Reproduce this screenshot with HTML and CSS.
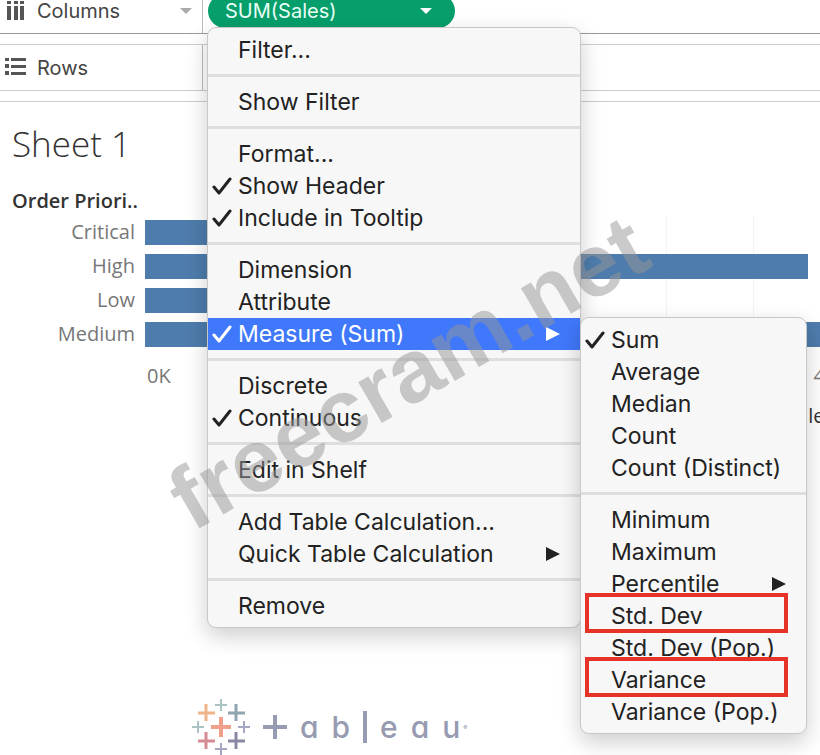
FILE: index.html
```html
<!DOCTYPE html>
<html lang="en">
<head>
    <meta charset="UTF-8">
    <meta name="viewport" content="width=device-width, initial-scale=1.0">
    <title>Sheet 1</title>
    <link rel="stylesheet" href="styles.css">
</head>
<body>
    <div class="workbook">
        <div class="shelf shelf-columns">
            <div class="shelf-name">
                <svg class="shelf-icon" viewBox="0 0 20 20" fill="#555">
                    <path d="M2 0h4v3H2zM9 0h4v3H9zM15 0h4v3h-4zM2 5h4v14H2zM9 5h4v14H9zM15 5h4v14h-4z"/>
                </svg>
                <span>Columns</span>
                <svg class="caret" viewBox="0 0 12 6"><path d="M0 0h12L6 6z" fill="#aaa"/></svg>
            </div>
            <div class="shelf-fields">
                <button class="pill" type="button">
                    <span>SUM(Sales)</span>
                    <svg class="caret" viewBox="0 0 12 6"><path d="M0 0h12L6 6z" fill="#fff"/></svg>
                </button>
            </div>
        </div>
        <div class="shelf shelf-rows">
            <div class="shelf-name">
                <svg class="shelf-icon" viewBox="0 0 20 20" fill="#555">
                    <path d="M0 0h4v3H0zM6 0h15v3H6zM0 6h4v4H0zM6 7h15v3H6zM0 13h4v4H0zM6 14h15v3H6z"/>
                </svg>
                <span>Rows</span>
            </div>
            <div class="shelf-fields"></div>
        </div>

        <main class="sheet">
            <h1>Sheet 1</h1>
            <h2>Order Priori..</h2>
            <div class="chart">
                <div class="labels">
                    <span>Critical</span>
                    <span>High</span>
                    <span>Low</span>
                    <span>Medium</span>
                </div>
                <div class="plot">
                    <div class="bar" style="width: 40%"></div>
                    <div class="bar" style="width: 98.2%"></div>
                    <div class="bar" style="width: 35%"></div>
                    <div class="bar" style="width: 100%"></div>
                </div>
            </div>
            <div class="axis">
                <span>0K</span>
                <span>400K</span>
            </div>
            <p class="axis-title">Sales</p>
        </main>

        <footer class="brand">
            <svg class="brand-mark" viewBox="0 0 58 58" fill="none">
                <path d="M29 19v20M19 29h20" stroke="#f0a08a" stroke-width="4"/>
                <path d="M14 6v17M6 15h17" stroke="#f0b489" stroke-width="3"/>
                <path d="M44 6v17M36 15h17" stroke="#8fa5b0" stroke-width="3"/>
                <path d="M14 34v17M6 43h17" stroke="#d58b92" stroke-width="3"/>
                <path d="M44 34v17M36 43h17" stroke="#8789a3" stroke-width="3"/>
                <path d="M29 1v12M23 7h12M6 23v12M0 29h12" stroke="#a9c2c4" stroke-width="2"/>
                <path d="M52 23v12M46 29h12M29 45v12M23 51h12" stroke="#a4a6c2" stroke-width="2"/>
            </svg>
            <svg class="brand-plus" viewBox="0 0 24 24"><path d="M12 0v24M0 12h24" stroke="#979bb1" stroke-width="4"/></svg>
            <span>a</span><span>b</span><span class="brand-bar"></span><span>e</span><span>a</span><span>u</span><sup>®</sup>
        </footer>
    </div>

    <div class="menu main-menu">
        <button type="button">Filter...</button>
        <hr>
        <button type="button">Show Filter</button>
        <hr>
        <button type="button">Format...</button>
        <button type="button" class="checked"><svg class="check" viewBox="0 0 20 18"><path d="M2 10l5 6L18 2"/></svg>Show Header</button>
        <button type="button" class="checked"><svg class="check" viewBox="0 0 20 18"><path d="M2 10l5 6L18 2"/></svg>Include in Tooltip</button>
        <hr>
        <button type="button">Dimension</button>
        <button type="button">Attribute</button>
        <button type="button" class="checked selected"><svg class="check" viewBox="0 0 20 18"><path d="M2 10l5 6L18 2"/></svg>Measure (Sum)<svg class="arrow" viewBox="0 0 14 14"><path d="M0 0l14 7L0 14z"/></svg></button>
        <hr>
        <button type="button">Discrete</button>
        <button type="button" class="checked"><svg class="check" viewBox="0 0 20 18"><path d="M2 10l5 6L18 2"/></svg>Continuous</button>
        <hr>
        <button type="button">Edit in Shelf</button>
        <hr>
        <button type="button">Add Table Calculation...</button>
        <button type="button">Quick Table Calculation<svg class="arrow" viewBox="0 0 14 14"><path d="M0 0l14 7L0 14z"/></svg></button>
        <hr>
        <button type="button">Remove</button>
    </div>

    <div class="menu sub-menu">
        <button type="button" class="checked"><svg class="check" viewBox="0 0 20 18"><path d="M2 10l5 6L18 2"/></svg>Sum</button>
        <button type="button">Average</button>
        <button type="button">Median</button>
        <button type="button">Count</button>
        <button type="button">Count (Distinct)</button>
        <hr>
        <button type="button">Minimum</button>
        <button type="button">Maximum</button>
        <button type="button">Percentile<svg class="arrow" viewBox="0 0 14 14"><path d="M0 0l14 7L0 14z"/></svg></button>
        <button type="button" class="marked">Std. Dev</button>
        <button type="button">Std. Dev (Pop.)</button>
        <button type="button" class="marked">Variance</button>
        <button type="button">Variance (Pop.)</button>
    </div>

    <div class="watermark">freecram.net</div>
</body>
</html>
```

FILE: styles.css
```css
*,
*::after {
    box-sizing: border-box;
}

body {
    margin: 0;
    height: 100vh;
    position: relative;
    overflow: hidden;
    background: #fff;
    color: #333;
    font-family: "Open Sans", sans-serif;
}

button {
    border: 0;
    background: none;
    font: inherit;
    color: inherit;
    text-align: left;
}

.workbook {
    display: flex;
    flex-direction: column;
}

/* shelves */
.shelf {
    display: flex;
    height: 47px;
    border-top: 1px solid #ccc;
    border-bottom: 1px solid #ccc;
    font-family: Inter, sans-serif;
    font-size: 20px;
    color: #444;
}

.shelf-columns {
    margin-top: -13px;
    border-bottom-color: #999;
}

.shelf-rows {
    margin-top: 10px;
}

.shelf-name {
    display: flex;
    align-items: center;
    gap: 12px;
    width: 203px;
    padding: 0 10px 0 5px;
    border-right: 1px solid #bbb;
}

.shelf-icon {
    width: 20px;
    height: 20px;
    overflow: visible;
}

.caret {
    width: 12px;
    height: 6px;
    margin-left: auto;
}

.shelf-fields {
    display: flex;
    align-items: center;
    padding-left: 5px;
}

.pill {
    display: flex;
    align-items: center;
    width: 247px;
    height: 34px;
    padding: 0 23px 0 17px;
    border-radius: 17px;
    background: #069f6b;
    color: #e8fff5;
}

/* sheet */
.sheet {
    margin-top: 10px;
    border-top: 1px solid #ccc;
    overflow: hidden;
}

.sheet h1 {
    margin: 19px 0 0 12px;
    font-size: 35px;
    font-weight: 300;
    line-height: 46px;
}

.sheet h2 {
    margin: 20px 0 0 12px;
    font-size: 20px;
    font-weight: 600;
    line-height: 28px;
}

.chart {
    display: flex;
    height: 136px;
}

.labels,
.plot {
    display: flex;
    flex-direction: column;
    justify-content: space-around;
}

.labels {
    width: 145px;
    padding-right: 10px;
    text-align: right;
    font-size: 20px;
    line-height: 26px;
    color: #777;
}

.plot {
    flex: 1;
    background: repeating-linear-gradient(to right, transparent 0 86px, #f3f3f3 86px 87px);
}

.bar {
    height: 25px;
    background: #4e7cac;
}

.axis {
    display: flex;
    justify-content: space-between;
    margin: 11px -40px 0 147px;
    font-size: 20px;
    line-height: 28px;
    color: #777;
}

.axis-title {
    margin: 12px -14px 0 0;
    text-align: right;
    font-size: 20px;
    line-height: 28px;
}

/* logo */
.brand {
    display: flex;
    align-items: center;
    gap: 13px;
    margin: 268px 0 0 192px;
    height: 58px;
    font-family: Inter, sans-serif;
    font-size: 30px;
    font-weight: 500;
    font-feature-settings: "cv11";
    color: #979bb1;
}

.brand-mark {
    width: 58px;
    height: 58px;
}

.brand-plus {
    width: 24px;
    height: 24px;
}

.brand-bar {
    width: 4px;
    height: 32px;
    background: #979bb1;
}

.brand sup {
    margin-left: -10px;
    font-size: 6px;
}

/* menus */
.menu {
    position: absolute;
    display: flex;
    flex-direction: column;
    padding: 6px 0 5px;
    border: 1px solid #c8c8c8;
    border-radius: 9px;
    background: #f7f7f7;
    box-shadow: 0 8px 22px rgba(0, 0, 0, 0.2);
    font-family: Inter, sans-serif;
    font-size: 23px;
    color: #222;
}

.main-menu {
    top: 27px;
    left: 207px;
    width: 374px;
}

.sub-menu {
    top: 317px;
    left: 580px;
    width: 227px;
}

.menu button {
    position: relative;
    display: flex;
    align-items: center;
    height: 32px;
    padding: 0 20px 0 30px;
    white-space: nowrap;
}

.menu .checked {
    padding-left: 4px;
}

.menu .selected {
    background: #3f78fb;
    color: #fff;
}

.menu hr {
    width: 100%;
    height: 3px;
    margin: 8px 0 9px;
    border: 0;
    background: #dedede;
}

.check {
    width: 20px;
    height: 18px;
    margin-right: 6px;
    fill: none;
    stroke: currentColor;
    stroke-width: 3;
    stroke-linecap: round;
    stroke-linejoin: round;
}

.arrow {
    width: 14px;
    height: 14px;
    margin-left: auto;
    fill: currentColor;
}

.menu .marked::after {
    content: "";
    position: absolute;
    top: -7px;
    left: 4px;
    right: 18px;
    height: 40px;
    border: 4px solid #e63327;
}

.watermark {
    position: absolute;
    top: 324px;
    left: 141px;
    font-family: "Liberation Sans", sans-serif;
    font-size: 89px;
    font-weight: bold;
    line-height: 96px;
    color: rgba(150, 150, 150, 0.5);
    transform: rotate(-30deg);
    pointer-events: none;
}
```
